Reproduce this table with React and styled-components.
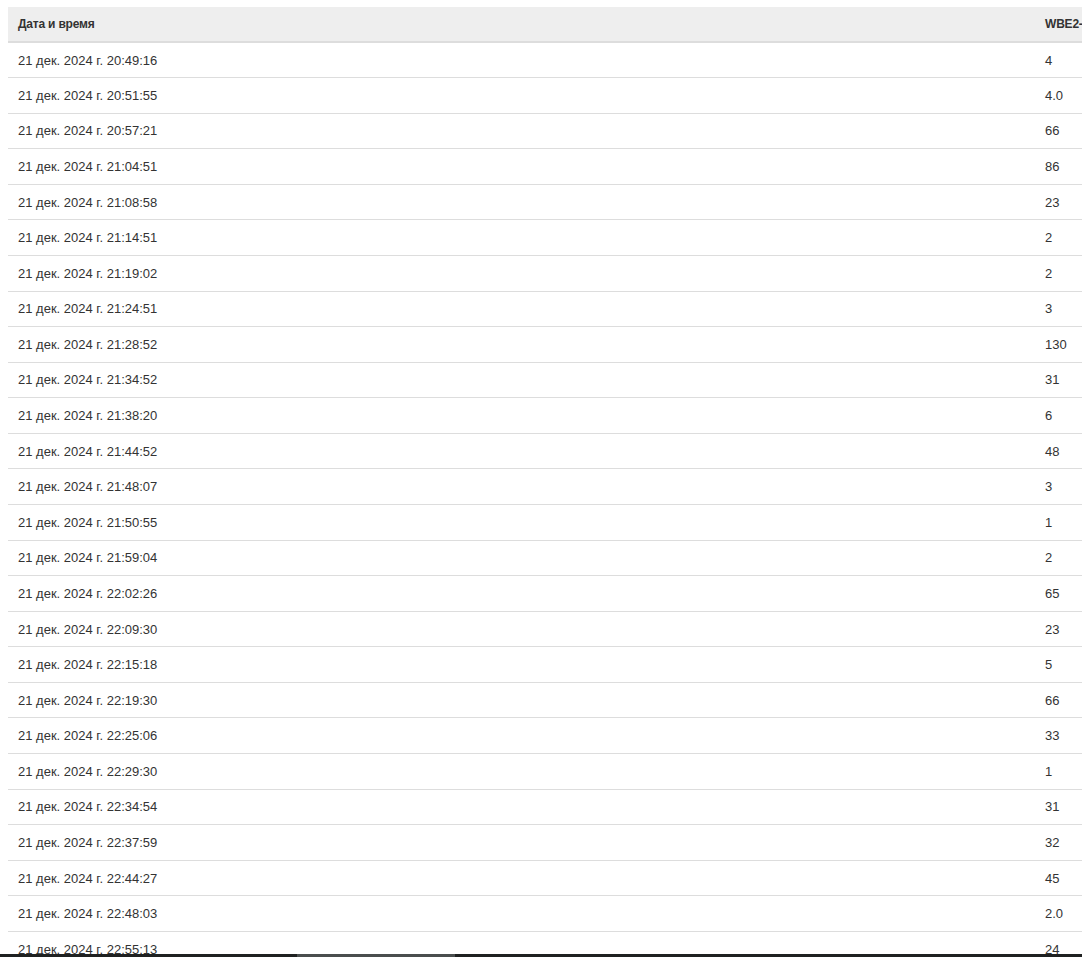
import React from 'react';
import styled, {createGlobalStyle} from 'styled-components';

const rows = [
    ['21 дек. 2024 г. 20:49:16', '4'],
    ['21 дек. 2024 г. 20:51:55', '4.0'],
    ['21 дек. 2024 г. 20:57:21', '66'],
    ['21 дек. 2024 г. 21:04:51', '86'],
    ['21 дек. 2024 г. 21:08:58', '23'],
    ['21 дек. 2024 г. 21:14:51', '2'],
    ['21 дек. 2024 г. 21:19:02', '2'],
    ['21 дек. 2024 г. 21:24:51', '3'],
    ['21 дек. 2024 г. 21:28:52', '130'],
    ['21 дек. 2024 г. 21:34:52', '31'],
    ['21 дек. 2024 г. 21:38:20', '6'],
    ['21 дек. 2024 г. 21:44:52', '48'],
    ['21 дек. 2024 г. 21:48:07', '3'],
    ['21 дек. 2024 г. 21:50:55', '1'],
    ['21 дек. 2024 г. 21:59:04', '2'],
    ['21 дек. 2024 г. 22:02:26', '65'],
    ['21 дек. 2024 г. 22:09:30', '23'],
    ['21 дек. 2024 г. 22:15:18', '5'],
    ['21 дек. 2024 г. 22:19:30', '66'],
    ['21 дек. 2024 г. 22:25:06', '33'],
    ['21 дек. 2024 г. 22:29:30', '1'],
    ['21 дек. 2024 г. 22:34:54', '31'],
    ['21 дек. 2024 г. 22:37:59', '32'],
    ['21 дек. 2024 г. 22:44:27', '45'],
    ['21 дек. 2024 г. 22:48:03', '2.0'],
    ['21 дек. 2024 г. 22:55:13', '24'],
    ['21 дек. 2024 г. 23:01:40', '12'],
];

function App() {
    return (
        <>
            <GlobalStyle/>
            <Page>
                <Table>
                    <colgroup>
                        <col style={{width: '1027px'}}/>
                        <col style={{width: '240px'}}/>
                    </colgroup>
                    <thead>
                        <tr>
                            <HeadCell>Дата и время</HeadCell>
                            <HeadCell>WBE2-01 Количество</HeadCell>
                        </tr>
                    </thead>
                    <tbody>
                        {rows.map(([date, value], i) => (
                            <tr key={i}>
                                <Cell first={i === 0}>{date}</Cell>
                                <Cell first={i === 0}>{value}</Cell>
                            </tr>
                        ))}
                    </tbody>
                </Table>
            </Page>
            <ScrollTrack>
                <ScrollThumb/>
            </ScrollTrack>
        </>
    )
}

const GlobalStyle = createGlobalStyle`
    html, body {
        margin: 0;
        padding: 0;
        background: #fff;
        overflow: hidden;
        font-family: "Liberation Sans", Arial, sans-serif;
    }
`;

const Page = styled.div`
    width: 1082px;
    height: 957px;
    overflow: hidden;
    padding: 7px 0 0 8px;
    box-sizing: border-box;
`;

const Table = styled.table`
    border-collapse: collapse;
    table-layout: fixed;
    width: 1267px;
    font-size: 13px;
    color: #333;
`;

const HeadCell = styled.th`
    background: #eeeeee;
    text-align: left;
    font-size: 12px;
    font-weight: bold;
    letter-spacing: -0.2px;
    padding: 0 10px;
    height: 34px;
    line-height: 34px;
    white-space: nowrap;
    overflow: hidden;
    color: #333;
    border-bottom: 2px solid #dddddd;
    box-sizing: border-box;
`;

const Cell = styled.td`
    padding: 0 10px;
    height: 35.58px;
    border-top: ${props => props.first ? 'none' : '1px solid #dddddd'};
    white-space: nowrap;
    box-sizing: border-box;
`;

const ScrollTrack = styled.div`
    position: fixed;
    left: 0;
    right: 0;
    bottom: 0;
    height: 3px;
    background: #1f2121;
`;

const ScrollThumb = styled.div`
    position: absolute;
    left: 297px;
    width: 158px;
    top: 0;
    bottom: 0;
    background: #4a4e4e;
`;

export default App;
